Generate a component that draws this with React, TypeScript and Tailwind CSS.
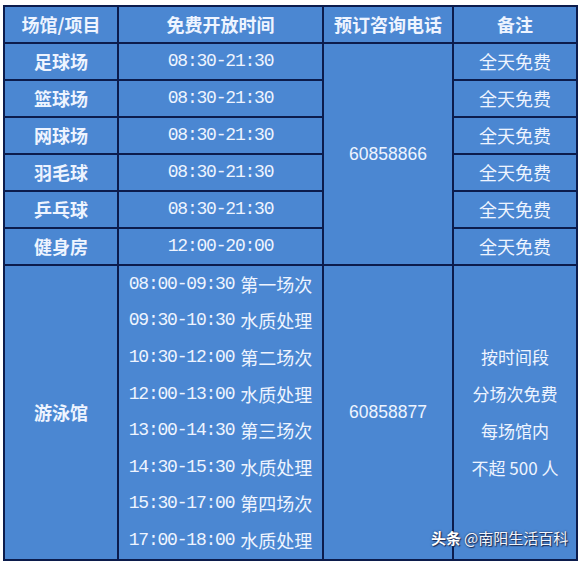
import React from 'react';

const CJK = "font-['Noto_Sans_CJK_SC',sans-serif]";
const MONO = "font-['Liberation_Mono','Noto_Sans_CJK_SC',monospace] text-[18px] tracking-[-1.2px]";

const venues = [
  { name: '足球场', time: '08:30-21:30' },
  { name: '篮球场', time: '08:30-21:30' },
  { name: '网球场', time: '08:30-21:30' },
  { name: '羽毛球', time: '08:30-21:30' },
  { name: '乒乓球', time: '08:30-21:30' },
  { name: '健身房', time: '12:00-20:00' },
];

const swimSlots = [
  ['08:00-09:30', '第一场次'],
  ['09:30-10:30', '水质处理'],
  ['10:30-12:00', '第二场次'],
  ['12:00-13:00', '水质处理'],
  ['13:00-14:30', '第三场次'],
  ['14:30-15:30', '水质处理'],
  ['15:30-17:00', '第四场次'],
  ['17:00-18:00', '水质处理'],
];

const swimNotes = ['按时间段', '分场次免费', '每场馆内', '不超 500 人'];

const cell = 'border-2 border-[#0c1c4c] p-0 text-center align-middle';

export default function App() {
  return (
    <div className="w-[580px] h-[563px] bg-white pt-[5px] pl-[3px] relative">
      <table className="border-collapse table-fixed w-[573px] bg-[#4b87d2] text-[#eef4ff]">
        <colgroup>
          <col className="w-[114px]" />
          <col className="w-[205px]" />
          <col className="w-[130px]" />
          <col className="w-[124px]" />
        </colgroup>
        <thead>
          <tr className="h-[37px]">
            {['场馆/项目', '免费开放时间', '预订咨询电话', '备注'].map(h => (
              <th key={h} className={`${cell} ${CJK} text-[18px] font-bold`}>{h}</th>
            ))}
          </tr>
        </thead>
        <tbody>
          {venues.map((v, i) => (
            <tr key={v.name} className="h-[37px]">
              <td className={`${cell} ${CJK} text-[18px] font-bold`}>{v.name}</td>
              <td className={`${cell} ${MONO}`}>{v.time}</td>
              {i === 0 && (
                <td rowSpan={6} className={`${cell} font-['Liberation_Sans',sans-serif] text-[17.5px]`}>60858866</td>
              )}
              <td className={`${cell} ${CJK} text-[18px]`}>全天免费</td>
            </tr>
          ))}
          <tr className="h-[293px]">
            <td className={`${cell} ${CJK} text-[18px] font-bold`}>游泳馆</td>
            <td className={cell}>
              <div className="flex flex-col">
                {swimSlots.map(([t, label]) => (
                  <div key={t} className="h-[36.6px] flex items-center justify-center gap-[6px]">
                    <span className={MONO}>{t}</span>
                    <span className={`${CJK} text-[18px]`}>{label}</span>
                  </div>
                ))}
              </div>
            </td>
            <td className={`${cell} font-['Liberation_Sans',sans-serif] text-[17.5px]`}>60858877</td>
            <td className={cell}>
              <div className="flex flex-col items-center">
                {swimNotes.map(n => (
                  <div key={n} className={`h-[37px] flex items-center ${CJK} text-[17px]`}>{n}</div>
                ))}
              </div>
            </td>
          </tr>
        </tbody>
      </table>
      {/* watermark */}
      <div className={`absolute left-[431px] top-[530px] flex items-center gap-[3px] ${CJK} text-[15px] leading-none [text-shadow:0_0_2px_#1b2b55,1px_1px_1px_#1b2b55]`}>
        <span className="font-bold text-white">头条</span>
        <span className="text-[#f3f6fb]">@南阳生活百科</span>
      </div>
    </div>
  );
}
